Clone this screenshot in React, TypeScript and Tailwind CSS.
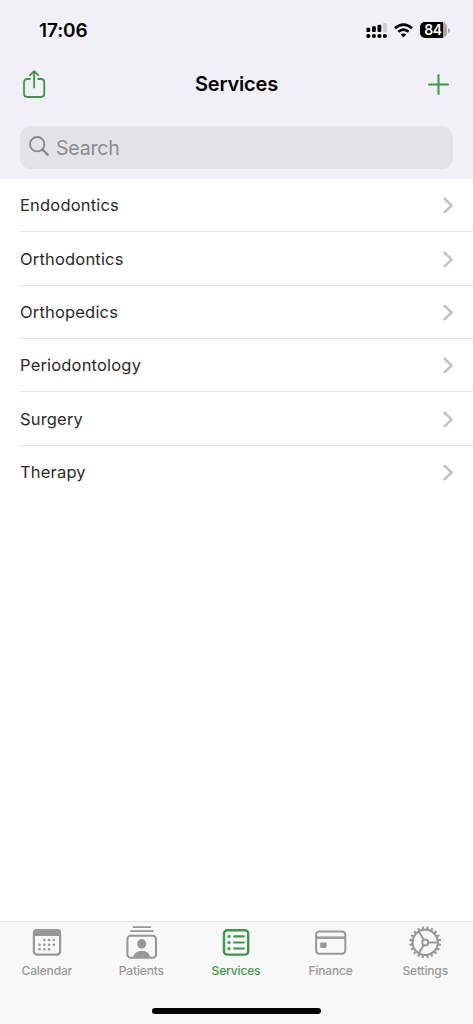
import React from 'react';

const services = ['Endodontics', 'Orthodontics', 'Orthopedics', 'Periodontology', 'Surgery', 'Therapy'];

const StatusBar: React.FC = () => (
  <div className="flex h-[60px] items-center justify-between pl-[39px] pr-[23px]">
    <span className="pt-[2px] text-[19px] font-semibold leading-6 tracking-[-0.1px]">17:06</span>
    <div className="flex items-center">
      <svg width="22" height="18" viewBox="0 0 22 18" className="mr-[6px]">
        {[2.3, 7.9, 13.4, 18.9].map((x) => (
          <circle key={x} cx={x} cy="15" r="2.1" />
        ))}
        <rect x="0.4" y="6.7" width="3.8" height="4.2" rx="1" />
        <rect x="6" y="5.2" width="3.8" height="5.7" rx="1" />
        <rect x="11.5" y="3.7" width="3.8" height="7.2" rx="1" />
        <rect x="17" y="2" width="3.8" height="8.9" rx="1" fill="#cecdd2" />
      </svg>
      <svg width="19" height="15" viewBox="0 0 19 15" fill="none" stroke="#000" strokeWidth="2.7" className="mr-[7px]">
        <path d="M1 5.1 Q9.5-2 18 5.1" />
        <path d="M4.3 8.8 Q9.5 4.5 14.7 8.8" />
        <path d="M9.5 14.4 6.7 11.6 Q9.5 9.4 12.3 11.6Z" fill="#000" stroke="none" />
      </svg>
      <div className="flex h-4 w-[27px] items-center justify-center overflow-hidden rounded-[5px] bg-[linear-gradient(to_right,#000_23px,#a8a8ab_23px)] text-[14px] font-semibold leading-4 tracking-[-0.3px] text-white">
        <span className="pr-[1px]">84</span>
      </div>
      <div className="ml-[1px] h-[5px] w-[2px] rounded-r-full bg-[#aaa9ae]" />
    </div>
  </div>
);

const Chevron: React.FC = () => (
  <svg width="12" height="18" viewBox="0 0 12 18" fill="none" stroke="#c3c3c5" strokeWidth="2.5" strokeLinecap="round" strokeLinejoin="round">
    <path d="M2.6 2.8 9.6 9.5 2.6 16.2" />
  </svg>
);

const CalendarIcon: React.FC = () => (
  <svg width="34" height="34" viewBox="0 0 34 34">
    <rect x="3.9" y="5" width="26.2" height="24.6" rx="3.2" fill="none" stroke="currentColor" strokeWidth="2.2" />
    <path d="M3 11V7.5Q3 4 6.5 4H27.5Q31 4 31 7.5V11Z" fill="currentColor" />
    {[
      [14.3, 15], [19, 15], [23.9, 15],
      [9.6, 19.7], [14.3, 19.7], [19, 19.7], [23.9, 19.7],
      [9.6, 24.3], [14.3, 24.3], [19, 24.3],
    ].map(([x, y]) => (
      <circle key={`${x}-${y}`} cx={x} cy={y} r="1.25" fill="currentColor" />
    ))}
  </svg>
);

const PatientsIcon: React.FC = () => (
  <svg width="34" height="34" viewBox="0 0 34 34" fill="none" stroke="currentColor" strokeLinecap="round">
    <path d="M8.5 2.1H25.5M6 6.1H28" strokeWidth="1.8" />
    <rect x="2.4" y="10.7" width="28.6" height="22" rx="3.3" strokeWidth="2.1" />
    <ellipse cx="16.7" cy="18.9" rx="4.5" ry="4.9" fill="currentColor" stroke="none" />
    <path d="M7.7 32.4Q9.7 25.8 16.7 25.8T25.7 32.4Z" fill="currentColor" stroke="none" />
  </svg>
);

const star = 'M0-2.4.7-.8 2.3-.7 1.1.5 1.5 2.1 0 1.2-1.5 2.1-1.1.5-2.3-.7-.7-.8Z';

const ServicesIcon: React.FC = () => (
  <svg width="34" height="34" viewBox="0 0 34 34" fill="none" stroke="currentColor" strokeWidth="2.4" strokeLinecap="round">
    <rect x="5" y="5.2" width="24.2" height="24.4" rx="3.4" />
    {[11.4, 17.5, 23.5].map((y) => (
      <g key={y}>
        <path d={star} transform={`translate(10 ${y})`} fill="currentColor" stroke="none" />
        <path d={`M15.2 ${y}H24.8`} strokeWidth="2.2" />
      </g>
    ))}
  </svg>
);

const FinanceIcon: React.FC = () => (
  <svg width="34" height="34" viewBox="0 0 34 34" fill="none" stroke="currentColor" strokeWidth="2">
    <rect x="2.1" y="6.4" width="29.2" height="22.4" rx="3.2" />
    <path d="M2.1 12.7H31.3" strokeWidth="2.5" />
    <rect x="6.2" y="17.5" width="6.4" height="5.4" rx="1.2" fill="currentColor" stroke="none" />
  </svg>
);

const SettingsIcon: React.FC = () => (
  <svg width="34" height="34" viewBox="0 0 34 34" fill="none" stroke="currentColor" strokeWidth="2">
    <circle cx="16.2" cy="17.4" r="12.6" />
    <circle cx="16.2" cy="17.4" r="3" />
    <path d="M19.2 17.4H28.7M14.7 14.8 9.9 6.5M14.7 20 9.9 28.3" />
    {Array.from({ length: 20 }, (_, i) => (
      <path key={i} d="M14.8 4.4 15.4 1.4H17L17.6 4.4Z" fill="currentColor" stroke="none" transform={`rotate(${i * 18 + 9} 16.2 17.4)`} />
    ))}
  </svg>
);

const tabs = [
  { label: 'Calendar', Icon: CalendarIcon },
  { label: 'Patients', Icon: PatientsIcon },
  { label: 'Services', Icon: ServicesIcon, active: true },
  { label: 'Finance', Icon: FinanceIcon },
  { label: 'Settings', Icon: SettingsIcon },
];

const App: React.FC = () => {
  return (
    <div className="flex h-[1024px] w-[473px] flex-col overflow-hidden bg-[#fefefe] font-['Inter',sans-serif] text-black">
      {/* Header */}
      <header className="h-[179px] shrink-0 bg-[#f1f0f6]">
        <StatusBar />
        <div className="grid h-12 grid-cols-3 items-center pl-[22px] pr-6 text-[#3b9a48]">
          <button aria-label="Share" className="justify-self-start">
            <svg width="24" height="30" viewBox="0 0 24 30" fill="none" stroke="currentColor" strokeWidth="1.8" strokeLinecap="round" strokeLinejoin="round">
              <path d="M8 10H5.2Q2 10 2 13.2V24.8Q2 28 5.2 28H19Q22.2 28 22.2 24.8V13.2Q22.2 10 19 10H16.2" />
              <path d="M12.1 18.4V2.2M8 6.2 12.1 2.1 16.2 6.2" />
            </svg>
          </button>
          <h1 className="justify-self-center whitespace-nowrap pl-[2px] text-[20px] font-semibold leading-6 tracking-[-0.2px] text-black">Services</h1>
          <button aria-label="Add" className="justify-self-end">
            <svg width="21" height="21" viewBox="0 0 21 21" stroke="currentColor" strokeWidth="2" strokeLinecap="round">
              <path d="M10.5 1V20M1 10.5H20" />
            </svg>
          </button>
        </div>
        <div className="mx-5 mt-[18px] flex h-[43px] items-center rounded-[11px] bg-[#e3e2e7] pl-[9px] text-[#85848a]">
          <svg width="20" height="20" viewBox="0 0 20 20" fill="none" stroke="currentColor" strokeWidth="1.8" strokeLinecap="round" className="mb-[3px]">
            <circle cx="8.2" cy="8.2" r="7.2" />
            <path d="M13.5 13.5 18.8 18.8" strokeWidth="2.2" />
          </svg>
          <span className="pl-[7px] text-[19.5px] leading-6 tracking-[-0.2px] text-[#8b8a90]">Search</span>
        </div>
      </header>

      {/* Services list */}
      <main className="flex-1">
        {services.map((service, i) => (
          <div key={service} className="flex h-[53.35px] items-center pl-5">
            <div className={`flex h-full flex-1 items-center justify-between pr-[19px] ${i < services.length - 1 ? 'border-b border-[#e5e5e6]' : ''}`}>
              <span className="text-[16.5px] leading-6 tracking-[0.18px] text-[#2b2b2b]">{service}</span>
              <Chevron />
            </div>
          </div>
        ))}
      </main>

      {/* Tab bar */}
      <nav className="flex h-[103px] shrink-0 flex-col border-t border-[#e7e7e8] bg-[#f8f8f8]">
        <div className="grid grid-cols-5 pt-[3px]">
          {tabs.map(({ label, Icon, active }) => (
            <button key={label} className={`flex flex-col items-center ${active ? 'text-[#3b9a48]' : 'text-[#989898]'}`}>
              <Icon />
              <span className="mt-1 pr-[1px] text-[12px] font-medium leading-4 tracking-[-0.15px]">{label}</span>
            </button>
          ))}
        </div>
        <div className="mx-auto mb-[10px] mt-auto h-[6px] w-[169px] rounded-full bg-black" />
      </nav>
    </div>
  );
};

export default App;
